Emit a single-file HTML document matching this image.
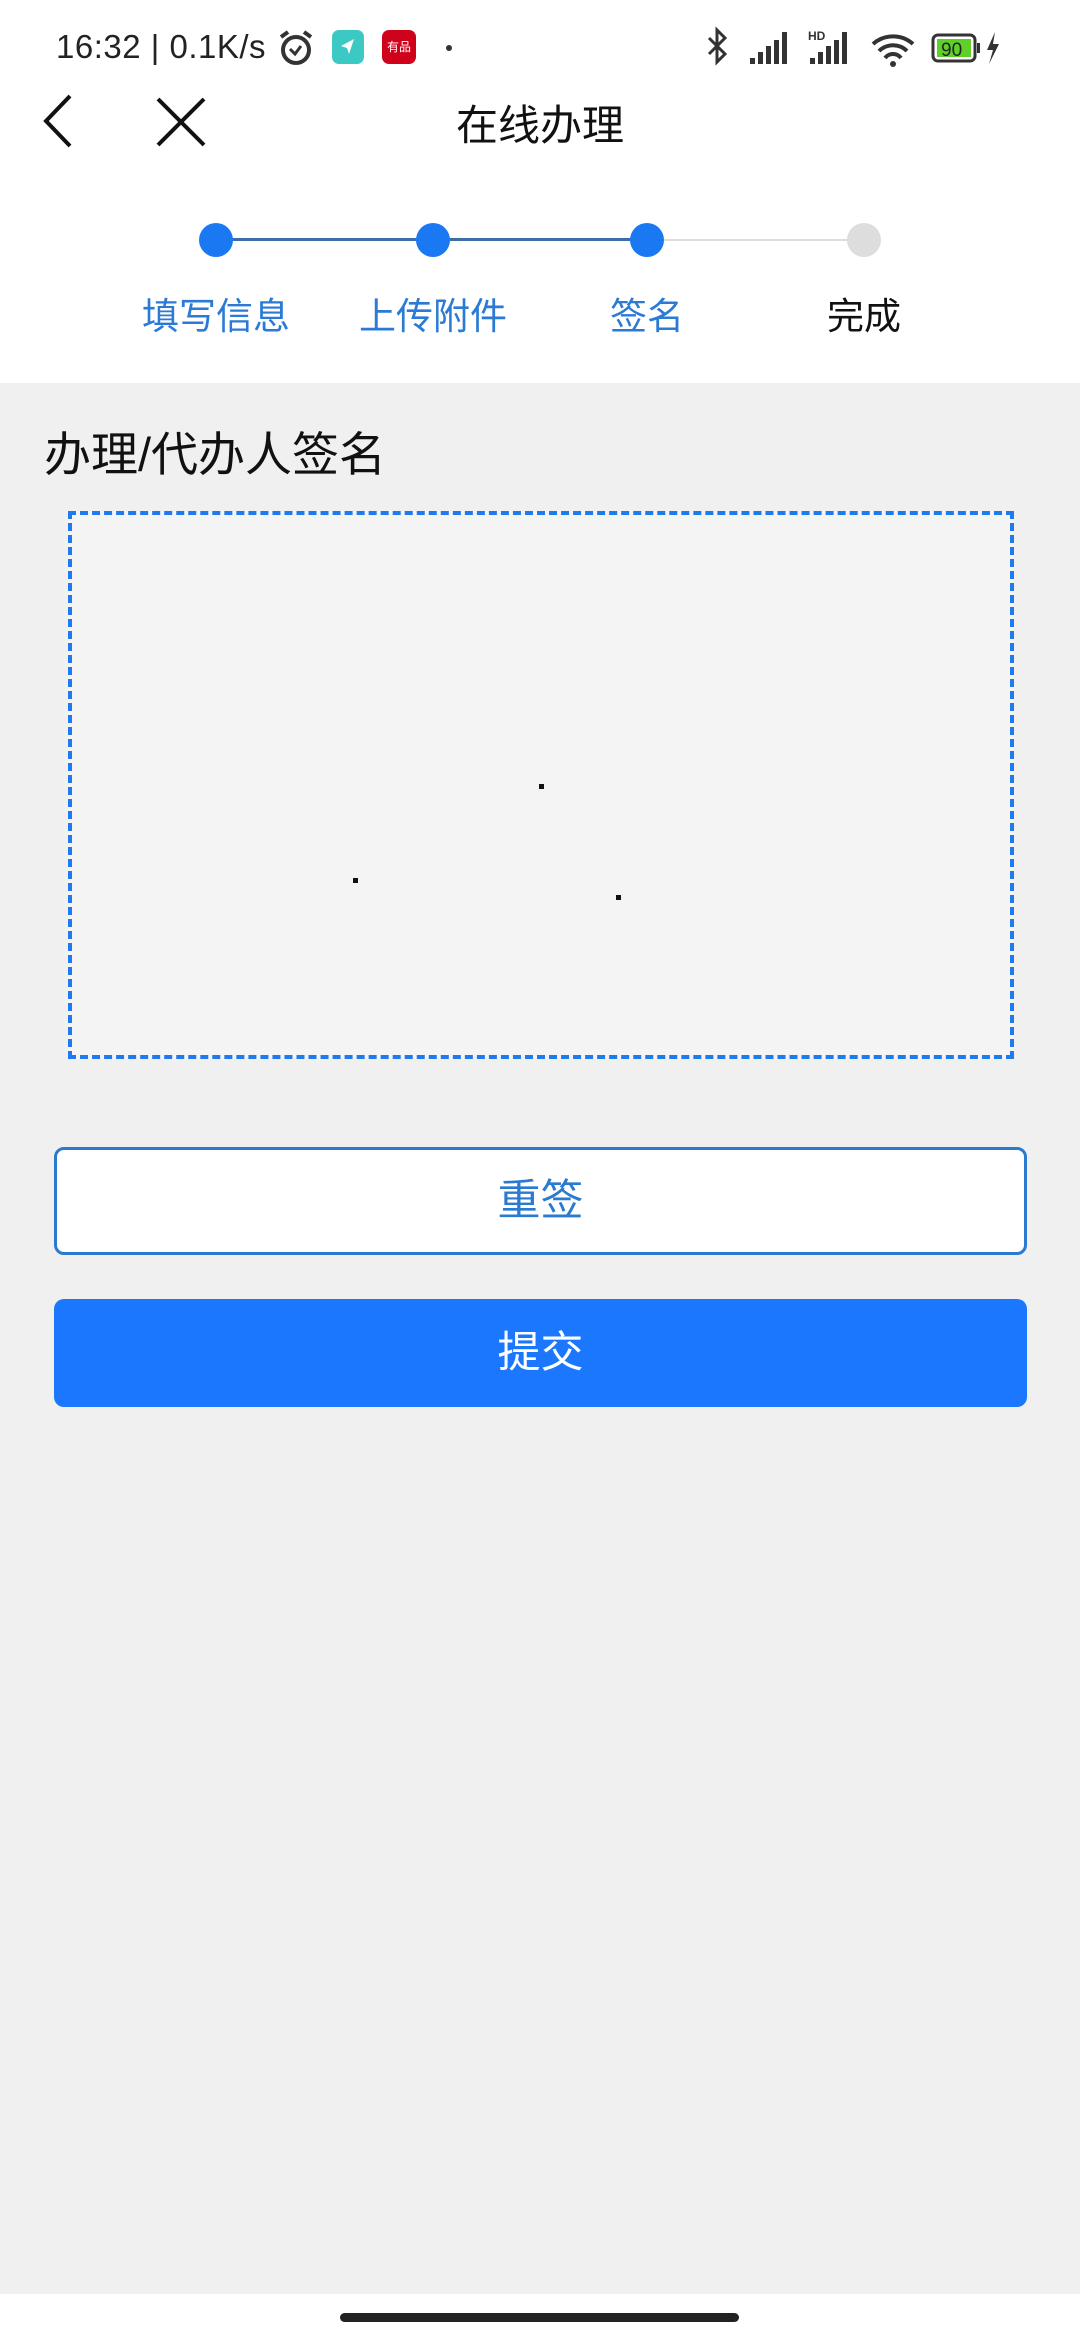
<!DOCTYPE html>
<html><head><meta charset="utf-8"><style>
*{margin:0;padding:0;box-sizing:border-box}
body{width:1080px;height:2340px;background:#f0f0f0;font-family:"Liberation Sans","Noto Sans CJK SC",sans-serif;position:relative;overflow:hidden}
.abs{position:absolute}
</style></head><body>
<div class="abs" style="left:0;top:0;width:1080px;height:383px;background:#fff"></div>
<!-- status bar -->
<div class="abs" style="left:56px;top:28px;font-size:33px;color:#222;white-space:nowrap;letter-spacing:0.5px">16:32 | 0.1K/s</div>
<svg class="abs" style="left:276px;top:28px" width="40" height="40" viewBox="0 0 40 40"><circle cx="20" cy="22" r="13" fill="none" stroke="#333" stroke-width="4"/><path d="M14 21l5 5 6-8" stroke="#333" stroke-width="3" fill="none"/><path d="M5 9l7-5M35 9l-7-5" stroke="#333" stroke-width="4"/></svg>
<div class="abs" style="left:332px;top:30px;width:32px;height:34px;border-radius:7px;background:#3cc9c4"></div>
<svg class="abs" style="left:338px;top:36px" width="20" height="20"><path d="M16 3L3 10l6 2 2 6z" fill="#fff"/></svg>
<div class="abs" style="left:382px;top:30px;width:34px;height:34px;border-radius:7px;background:#d0021b;color:#fff;font-size:12px;line-height:34px;text-align:center">有品</div>
<div class="abs" style="left:446px;top:45px;width:6px;height:6px;border-radius:3px;background:#333"></div>
<svg class="abs" style="left:705px;top:26px" width="320" height="44" viewBox="0 0 320 44">
<path d="M4 12l16 16-8 8V4l8 8-16 16" stroke="#333" stroke-width="3" fill="none"/>
<g fill="#333"><rect x="45" y="32" width="5" height="6"/><rect x="53" y="26" width="5" height="12"/><rect x="61" y="20" width="5" height="18"/><rect x="69" y="14" width="5" height="24"/><rect x="77" y="6" width="5" height="32"/>
<rect x="105" y="32" width="5" height="6"/><rect x="113" y="26" width="5" height="12"/><rect x="121" y="20" width="5" height="18"/><rect x="129" y="14" width="5" height="24"/><rect x="137" y="6" width="5" height="32"/></g>
<text x="103" y="14" font-size="12" font-family="Liberation Sans" font-weight="bold" fill="#333">HD</text>
<path d="M168 18a30 30 0 0 1 40 0M174 25a20 20 0 0 1 28 0M180 32a10 10 0 0 1 16 0" stroke="#333" stroke-width="4" fill="none"/><circle cx="188" cy="38" r="3" fill="#333"/>
<rect x="228" y="9" width="42" height="26" rx="5" fill="none" stroke="#333" stroke-width="3"/><rect x="232" y="13" width="34" height="18" fill="#5fcf2a"/><rect x="272" y="17" width="3" height="10" fill="#333"/>
<text x="236" y="30" font-size="19" font-family="Liberation Sans" fill="#222">90</text>
<path d="M290 6l-8 18h6l-4 14 10-20h-6z" fill="#333"/>
</svg>
<!-- nav -->
<svg class="abs" style="left:38px;top:92px" width="40" height="58"><path d="M32 4L8 29l24 25" stroke="#111" stroke-width="4" fill="none"/></svg>
<svg class="abs" style="left:155px;top:96px" width="52" height="52"><path d="M3 3l46 46M49 3L3 49" stroke="#111" stroke-width="4"/></svg>
<div class="abs" style="left:0;width:1080px;top:92px;text-align:center;font-size:42px;color:#111">在线办理</div>
<!-- stepper -->
<div class="abs" style="left:216px;top:238px;width:431px;height:3px;background:#3c6fa8"></div>
<div class="abs" style="left:647px;top:239px;width:217px;height:2px;background:#ddd"></div>
<div class="abs" style="left:199px;top:223px;width:34px;height:34px;border-radius:50%;background:#1a78f2"></div>
<div class="abs" style="left:416px;top:223px;width:34px;height:34px;border-radius:50%;background:#1a78f2"></div>
<div class="abs" style="left:630px;top:223px;width:34px;height:34px;border-radius:50%;background:#1a78f2"></div>
<div class="abs" style="left:847px;top:223px;width:34px;height:34px;border-radius:50%;background:#ddd"></div>
<div class="abs" style="left:116px;top:286px;width:200px;text-align:center;font-size:37px;color:#2a7ad6">填写信息</div>
<div class="abs" style="left:333px;top:286px;width:200px;text-align:center;font-size:37px;color:#2a7ad6">上传附件</div>
<div class="abs" style="left:547px;top:286px;width:200px;text-align:center;font-size:37px;color:#2a7ad6">签名</div>
<div class="abs" style="left:764px;top:286px;width:200px;text-align:center;font-size:37px;color:#111">完成</div>
<!-- content -->
<div class="abs" style="left:44px;top:416px;font-size:47px;color:#111">办理/代办人签名</div>
<div class="abs" style="left:68px;top:511px;width:946px;height:548px;border:4px dashed #1f7af0;background:#f4f4f5"></div>
<div class="abs" style="left:539px;top:784px;width:5px;height:5px;background:#111"></div>
<div class="abs" style="left:353px;top:878px;width:5px;height:5px;background:#111"></div>
<div class="abs" style="left:616px;top:895px;width:5px;height:5px;background:#111"></div>
<div class="abs" style="left:54px;top:1147px;width:973px;height:108px;border:3px solid #2a7ad0;border-radius:10px;background:#fff;text-align:center;line-height:102px;font-size:43px;color:#2a7ad0">重签</div>
<div class="abs" style="left:54px;top:1299px;width:973px;height:108px;border-radius:10px;background:#1b78fe;text-align:center;line-height:108px;font-size:43px;color:#fff">提交</div>
<div class="abs" style="left:0;top:2294px;width:1080px;height:46px;background:#fff"></div>
<div class="abs" style="left:340px;top:2313px;width:399px;height:9px;border-radius:5px;background:#222"></div>
</body></html>
